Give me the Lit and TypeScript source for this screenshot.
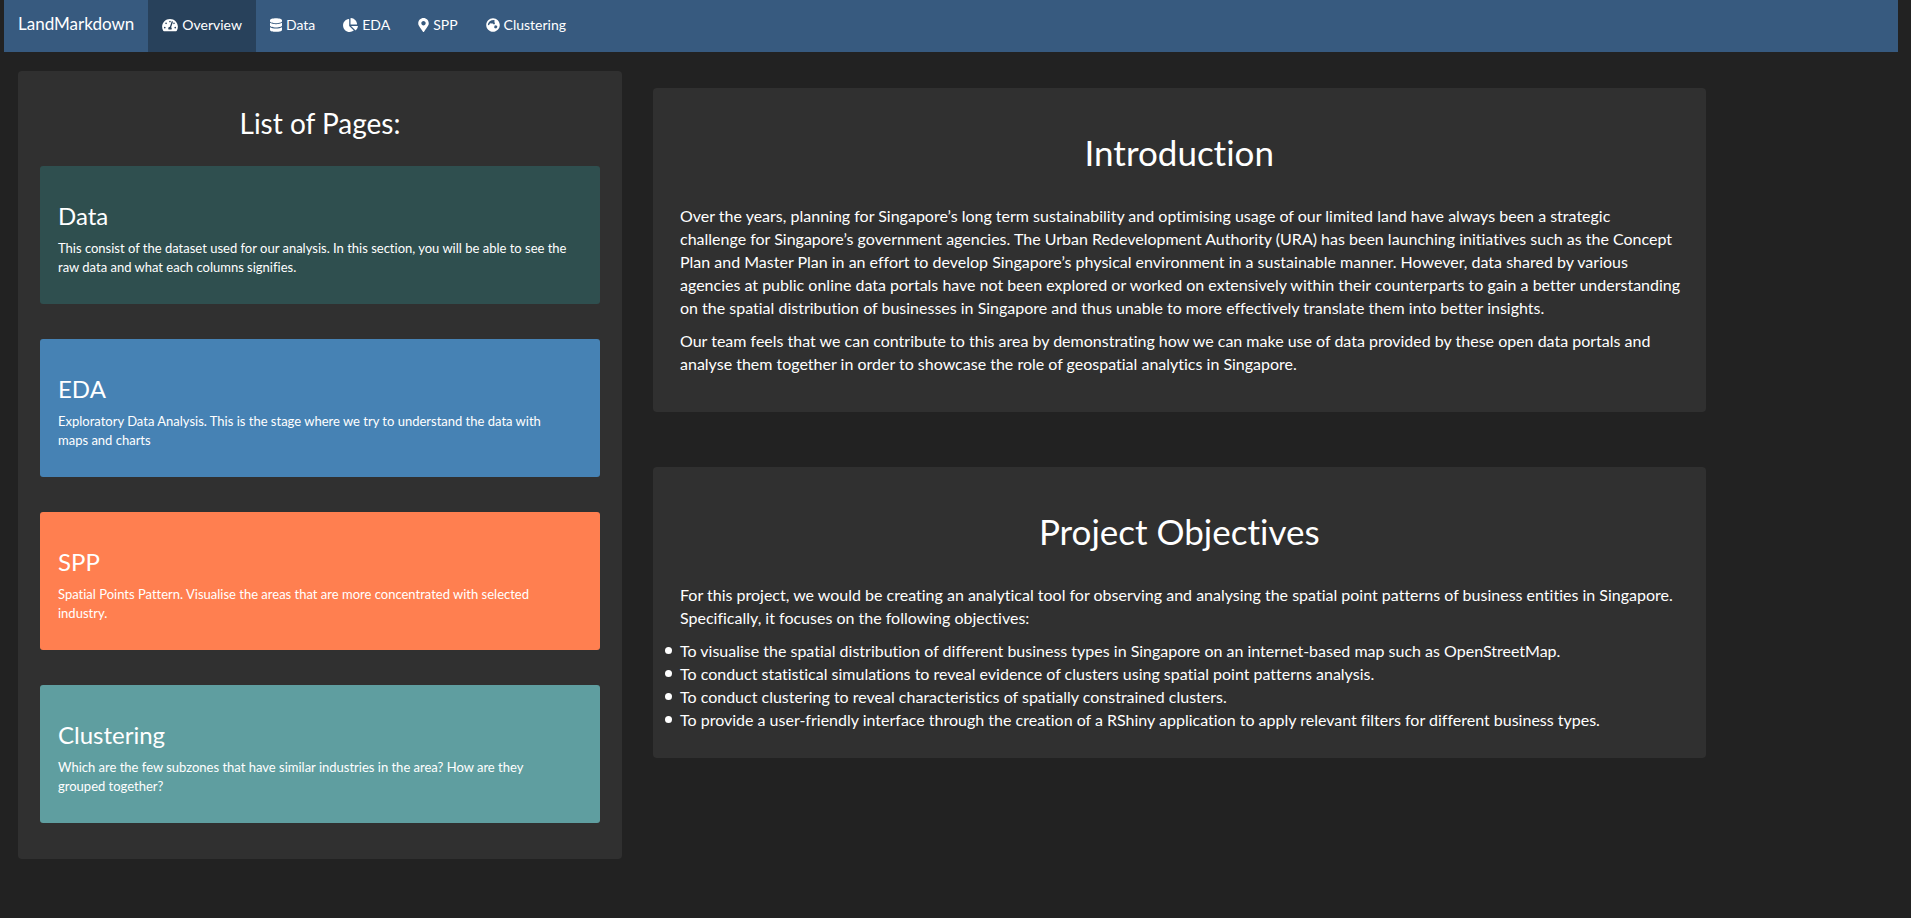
import { LitElement, html, css, svg } from "lit";
import { customElement, property, state } from "lit/decorators.js";
import { classMap } from "lit/directives/class-map.js";

type PageName = "Overview" | "Data" | "EDA" | "SPP" | "Clustering";

interface NavEntry {
  name: PageName;
  viewBox: string;
  width: number;
  path: string;
}

// Solid glyphs on a 512-unit grid, 14px tall in the bar.
const NAV: NavEntry[] = [
  {
    name: "Overview",
    viewBox: "0 0 576 512",
    width: 16,
    path: "M288 32C128.9 32 0 160.9 0 320c0 52.8 14.3 102.3 39.1 144.8 5.6 9.6 16.3 15.2 27.4 15.2h443c11.1 0 21.8-5.6 27.4-15.2C561.8 422.3 576 372.8 576 320c0-159.1-128.9-288-288-288zm0 64c14.7 0 26.6 10.1 30.3 23.7-1.1 2.3-2.6 4.2-3.5 6.7l-9.2 27.7c-5.1 3.5-11 6-17.6 6-17.7 0-32-14.3-32-32S270.3 96 288 96zM96 384c-17.7 0-32-14.3-32-32s14.3-32 32-32 32 14.3 32 32-14.3 32-32 32zm48-160c-17.7 0-32-14.3-32-32s14.3-32 32-32 32 14.3 32 32-14.3 32-32 32zm246.8-72.4l-61.3 184C343.1 347.3 352 364.5 352 384c0 11.7-3.4 22.6-8.9 32H232.9c-5.5-9.5-8.9-20.3-8.9-32 0-33.9 26.5-61.4 59.9-63.6l61.3-184c4.2-12.6 17.7-19.5 30.4-15.2 12.6 4.2 19.4 17.8 15.2 30.4zm14.7 57.2l15.5-46.6c3.5-1.3 7.1-2.2 11.1-2.2 17.7 0 32 14.3 32 32s-14.3 32-32 32c-11.4 0-20.9-6.3-26.6-15.2zM480 384c-17.7 0-32-14.3-32-32s14.3-32 32-32 32 14.3 32 32-14.3 32-32 32z",
  },
  {
    name: "Data",
    viewBox: "0 0 448 512",
    width: 12,
    path: "M448 73.1v45.8C448 159.1 347.7 192 224 192S0 159.1 0 118.9V73.1C0 32.9 100.3 0 224 0s224 32.9 224 73.1zM448 176v102.9C448 319.1 347.7 352 224 352S0 319.1 0 278.9V176c48.1 33.1 136.2 48.6 224 48.6S399.9 209.1 448 176zm0 160v102.9C448 479.1 347.7 512 224 512S0 479.1 0 438.9V336c48.1 33.1 136.2 48.6 224 48.6S399.9 369.1 448 336z",
  },
  {
    name: "EDA",
    viewBox: "0 0 544 512",
    width: 15,
    path: "M527.8 288H290.5l158 158c6 6 15.9 6.5 22.2.6 38.7-36.4 65.4-85.6 73.1-141.1 1.3-9.3-6.5-17.5-16-17.5zm-15.8-64.8C503.7 103.7 408.3 8.3 288.8.1 279.7-.5 272 7.1 272 16.2V240h223.8c9.1 0 16.8-7.7 16.2-16.8zM224 288V50.7c0-9.4-8.2-17.3-17.5-16C86.2 51.5-5.4 155.9.3 281c5.8 128.5 116.7 232.6 245.3 231 50.6-.6 97.3-16.9 135.7-44.1 7.9-5.6 8.4-17.2 1.6-24L224 288z",
  },
  {
    name: "SPP",
    viewBox: "0 0 384 512",
    width: 11,
    path: "M172.3 501.7C27 291 0 269.4 0 192 0 86 86 0 192 0s192 86 192 192c0 77.4-27 99-172.3 309.7-9.5 13.8-29.9 13.8-39.4 0zM192 272c44.2 0 80-35.8 80-80s-35.8-80-80-80-80 35.8-80 80 35.8 80 80 80z",
  },
  {
    name: "Clustering",
    viewBox: "0 0 496 512",
    width: 14,
    path: "M248 8C111 8 0 119 0 256s111 248 248 248 248-111 248-248S385 8 248 8zM60 262c4-66 36-120 84-150l56-34 84-6 30 30-22 40 24 30v44l-40 20-34-36-50 4-30-14-34 24-20 44zM300 286l50-18 54 24-6 54-40 36-64-14z",
  },
];

interface PageCard {
  title: PageName;
  text: string;
  tone: string;
}

const CARDS: PageCard[] = [
  {
    title: "Data",
    text: "This consist of the dataset used for our analysis. In this section, you will be able to see the raw data and what each columns signifies.",
    tone: "slate",
  },
  {
    title: "EDA",
    text: "Exploratory Data Analysis. This is the stage where we try to understand the data with maps and charts",
    tone: "steel",
  },
  {
    title: "SPP",
    text: "Spatial Points Pattern. Visualise the areas that are more concentrated with selected industry.",
    tone: "coral",
  },
  {
    title: "Clustering",
    text: "Which are the few subzones that have similar industries in the area? How are they grouped together?",
    tone: "cadet",
  },
];

@customElement("nav-bar")
export class NavBar extends LitElement {
  @state() private active: PageName = "Overview";

  static styles = css`
    :host {
      display: block;
      background: #375a7f;
    }
    nav {
      display: flex;
      flex-wrap: wrap;
      min-height: 52px;
    }
    a {
      display: flex;
      align-items: center;
      color: #fff;
      text-decoration: none;
    }
    .brand {
      padding: 0 14px 4px;
      font-size: 17px;
      line-height: 20px;
    }
    ul {
      display: flex;
      flex-wrap: wrap;
      margin: 0;
      padding: 0;
      list-style: none;
    }
    li {
      display: flex;
    }
    .link {
      gap: 4px;
      padding: 0 14px 2px;
      font-size: 14px;
      line-height: 20px;
    }
    .link.active {
      background: #28415b;
    }
    .link:hover {
      background: #28415b;
    }
    svg {
      display: block;
      height: 14px;
      fill: currentColor;
      fill-rule: evenodd;
    }
  `;

  private select(event: Event, name: PageName) {
    event.preventDefault();
    this.active = name;
  }

  render() {
    return html`
      <nav aria-label="Main">
        <a class="brand" href="#">LandMarkdown</a>
        <ul>
          ${NAV.map(
            (entry) => html`<li>
              <a
                class=${classMap({ link: true, active: entry.name === this.active })}
                href="#${entry.name.toLowerCase()}"
                @click=${(event: Event) => this.select(event, entry.name)}
              >
                <svg viewBox=${entry.viewBox} width=${entry.width} aria-hidden="true">
                  ${svg`<path d=${entry.path}></path>`}
                </svg>
                <span>${entry.name}</span>
              </a>
            </li>`
          )}
        </ul>
      </nav>
    `;
  }
}

@customElement("page-card")
export class PageCardElement extends LitElement {
  @property({ attribute: "card-title" }) cardTitle = "";
  @property() text = "";
  @property() tone = "slate";

  static styles = css`
    :host {
      display: block;
    }
    article {
      padding: 35px 28px 27px 18px;
      border-radius: 3px;
      color: #fff;
    }
    .slate {
      background: #2f4f4f;
    }
    .steel {
      background: #4682b4;
    }
    .coral {
      background: #ff7f50;
    }
    .cadet {
      background: #5f9ea0;
    }
    h3 {
      margin: 0 0 8px;
      font-size: 24px;
      font-weight: 400;
      line-height: 30px;
    }
    p {
      margin: 0;
      font-size: 13px;
      line-height: 19px;
    }
  `;

  render() {
    return html`<article class=${this.tone}>
      <h3>${this.cardTitle}</h3>
      <p>${this.text}</p>
    </article>`;
  }
}

@customElement("text-panel")
export class TextPanel extends LitElement {
  @property() heading = "";

  static styles = css`
    :host {
      display: block;
      padding: 40px 20px 27px;
      border-radius: 4px;
      background: #303030;
    }
    h1 {
      margin: 0 0 28px;
      font-size: 35px;
      font-weight: 400;
      line-height: 48px;
      text-align: center;
    }
    .body {
      padding-left: 7px;
    }
  `;

  render() {
    return html`<h1>${this.heading}</h1>
      <div class="body"><slot></slot></div>`;
  }
}

@customElement("app-root")
export class AppRoot extends LitElement {
  static styles = css`
    :host {
      display: block;
      min-height: 100vh;
      background: #222;
      color: #fff;
      font-family: Lato, "Helvetica Neue", Arial, sans-serif;
      font-size: 16px;
      font-variant-ligatures: none;
      line-height: 23px;
    }
    nav-bar {
      margin: 0 13px 0 4px;
    }
    main {
      display: grid;
      grid-template-columns: minmax(0, 4fr) minmax(0, 7fr) minmax(0, 1fr);
      align-items: start;
      padding: 19px 6px 40px 3px;
    }
    .side {
      padding: 0 15px;
    }
    .pages {
      padding: 32px 22px 36px;
      border-radius: 4px;
      background: #303030;
    }
    .pages h2 {
      margin: 0 0 23px;
      font-size: 28px;
      font-weight: 400;
      line-height: 40px;
      text-align: center;
    }
    .cards {
      display: grid;
      gap: 35px;
    }
    .content {
      display: grid;
      gap: 55px;
      padding: 17px 41px 0 16px;
    }
    p {
      margin: 0 0 10px;
    }
    ul {
      margin: 0 0 0 -15px;
      padding: 0;
      list-style: none;
    }
    li {
      display: flex;
      gap: 8px;
    }
    li::before {
      content: "";
      flex: none;
      width: 7px;
      height: 7px;
      margin-top: 8px;
      border-radius: 50%;
      background: currentColor;
    }
  `;

  render() {
    return html`
      <nav-bar></nav-bar>
      <main>
        <div class="side">
          <section class="pages">
            <h2>List of Pages:</h2>
            <div class="cards">
              ${CARDS.map(
                (card) => html`<page-card
                  card-title=${card.title}
                  text=${card.text}
                  tone=${card.tone}
                ></page-card>`
              )}
            </div>
          </section>
        </div>
        <div class="content">
          <text-panel heading="Introduction">
            <p>
              Over the years, planning for Singapore’s long term sustainability and optimising usage of our limited land
              have always been a strategic<br />
              challenge for Singapore’s government agencies. The Urban Redevelopment
              Authority (URA) has been launching initiatives such as the Concept Plan and Master Plan in an effort to
              develop Singapore’s physical environment in a sustainable manner. However, data shared by various agencies
              at public online data portals have not been explored or worked on extensively within their counterparts to
              gain a better understanding on the spatial distribution of businesses in Singapore and thus unable to more
              effectively translate them into better insights.
            </p>
            <p>
              Our team feels that we can contribute to this area by demonstrating how we can make use of data provided
              by these open data portals and analyse them together in order to showcase the role of geospatial analytics
              in Singapore.
            </p>
          </text-panel>
          <text-panel heading="Project Objectives">
            <p>
              For this project, we would be creating an analytical tool for observing and analysing the spatial point
              patterns of business entities in Singapore. Specifically, it focuses on the following objectives:
            </p>
            <ul>
              <li>
                To visualise the spatial distribution of different business types in Singapore on an internet-based map
                such as OpenStreetMap.
              </li>
              <li>
                To conduct statistical simulations to reveal evidence of clusters using spatial point patterns analysis.
              </li>
              <li>To conduct clustering to reveal characteristics of spatially constrained clusters.</li>
              <li>
                To provide a user-friendly interface through the creation of a RShiny application to apply relevant
                filters for different business types.
              </li>
            </ul>
          </text-panel>
        </div>
      </main>
    `;
  }
}
